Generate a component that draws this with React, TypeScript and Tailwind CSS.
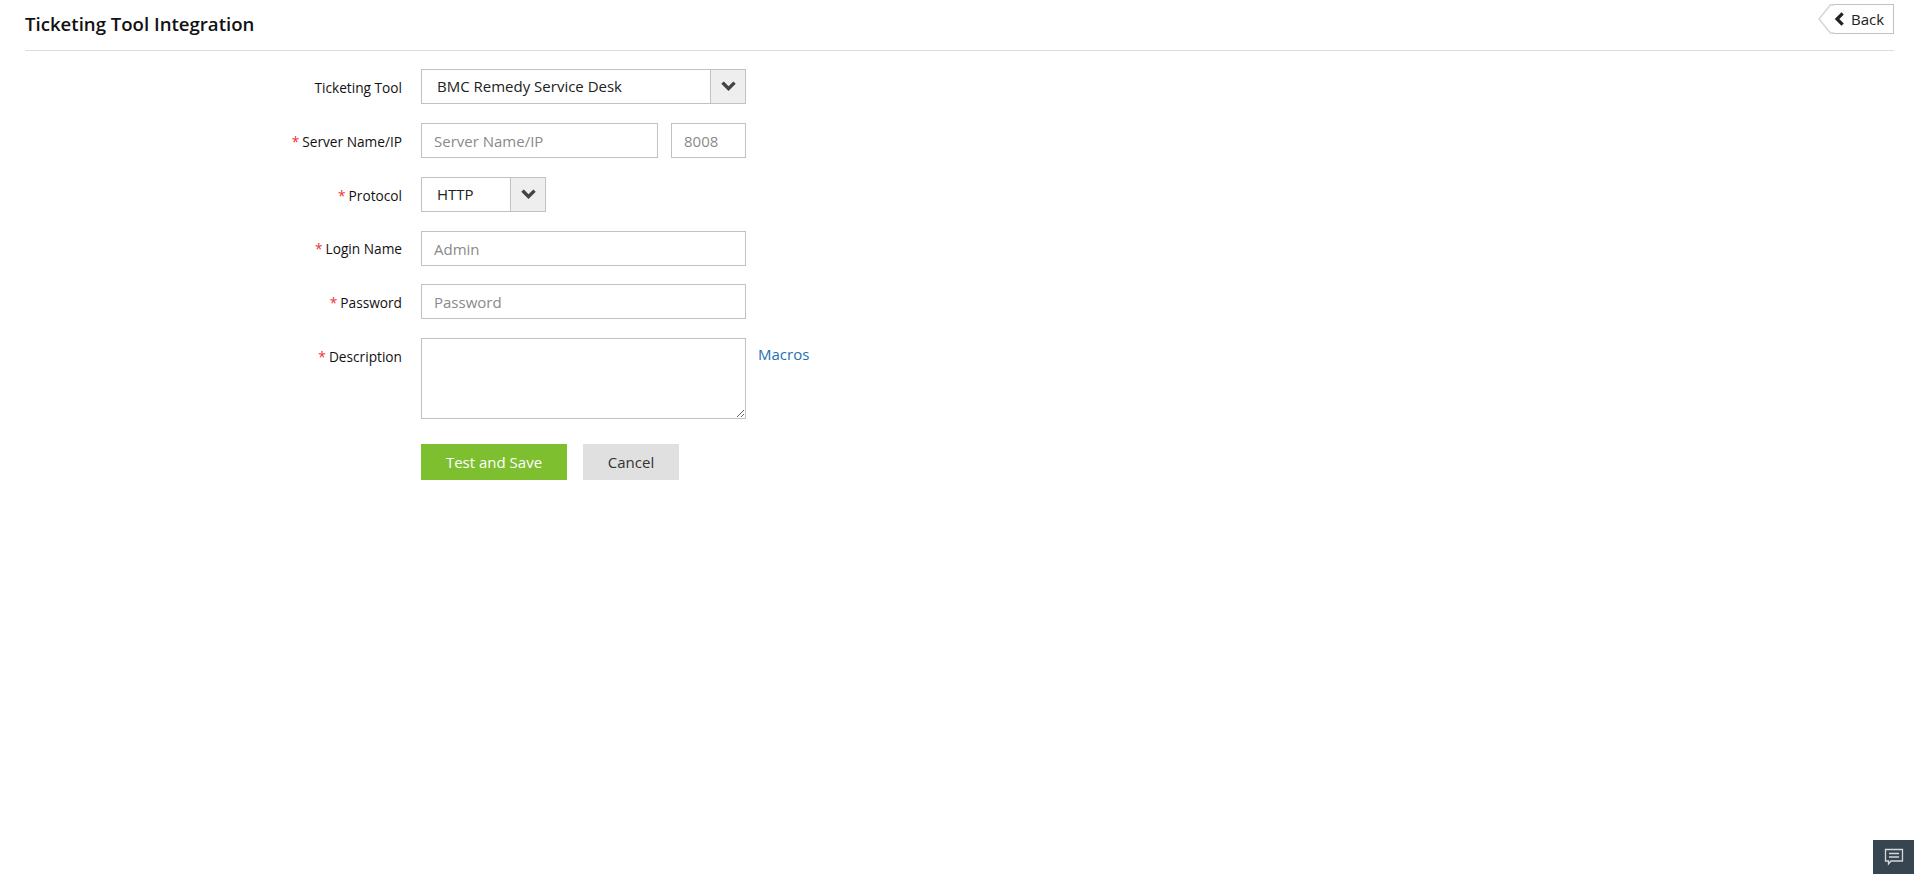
function Chevron({ dir, className }: { dir: "down" | "left"; className: string }) {
  return (
    <svg viewBox="0 0 14 14" className={className} fill="none" stroke="currentColor" strokeWidth="3.2" strokeLinecap="square">
      {dir === "down" ? <path d="M2.500 4.500 7 9l4.500-4.500" /> : <path d="M9.500 2.500 5 7l4.500 4.500" />}
    </svg>
  );
}

function Label({ text, required = true, top = "pt-[2px]" }: { text: string; required?: boolean; top?: string }) {
  return (
    <label className={`w-[421px] shrink-0 pr-[19px] text-right text-[13.7px] text-[#111] leading-[36px] whitespace-nowrap ${top}`}>
      {required && <span className="mr-[3px] text-[#e8343a]">*</span>}
      {text}
    </label>
  );
}

function TextInput({ placeholder, className }: { placeholder: string; className: string }) {
  return (
    <input
      placeholder={placeholder}
      className={`h-[35px] border border-[#c2c2c2] bg-white px-[12px] text-[15px] text-[#333] outline-none placeholder:text-[#8a8a8a] ${className}`}
    />
  );
}

function SelectBox({ value, width }: { value: string; width: string }) {
  return (
    <div className={`flex h-[35px] items-stretch border border-[#c2c2c2] bg-white ${width}`}>
      <div className="flex-1 pl-[15px] text-[15px] leading-[33px] text-[#222]">{value}</div>
      <div className="flex w-[35px] items-center justify-center border-l border-[#c2c2c2] bg-[#eeeeee] text-[#444]">
        <Chevron dir="down" className="h-[15px] w-[15px]" />
      </div>
    </div>
  );
}

export default function App() {
  return (
    <div className="relative h-[874px] w-full overflow-hidden bg-white font-['Open_Sans',sans-serif]">
      <header className="ml-[25px] mr-[26px] flex h-[51px] items-start justify-between border-b border-[#dcdcdc]">
        <h1 className="mt-[10px] text-[18.6px] leading-[28px] font-semibold text-[#111]">Ticketing Tool Integration</h1>
        <button className="mt-[4px] flex h-[30px] w-[76px] items-center">
          <svg width="16" height="30" viewBox="0 0 16 30" className="shrink-0">
            <path d="M16 .8H12.500L1 15 12.500 29.200H16" fill="#fff" stroke="#d8d8d8" strokeWidth="1.700" />
          </svg>
          <span className="flex h-[30px] flex-1 items-center gap-[5px] border-y border-r border-[#c2c2c2] text-[15px] text-[#222]">
            <Chevron dir="left" className="-ml-[2px] h-[14px] w-[14px] text-[#222]" />
            Back
          </span>
        </button>
      </header>

      <form className="pt-[18px]">
        <div className="flex h-[35px] items-center">
          <Label text="Ticketing Tool" required={false} />
          <SelectBox value="BMC Remedy Service Desk" width="w-[325px]" />
        </div>
        <div className="mt-[19px] flex h-[35px] items-center">
          <Label text="Server Name/IP" />
          <TextInput placeholder="Server Name/IP" className="w-[237px]" />
          <TextInput placeholder="8008" className="ml-[13px] w-[75px]" />
        </div>
        <div className="mt-[19px] flex h-[35px] items-center">
          <Label text="Protocol" />
          <SelectBox value="HTTP" width="w-[125px]" />
        </div>
        <div className="mt-[19px] flex h-[35px] items-center">
          <Label text="Login Name" top="pt-0" />
          <TextInput placeholder="Admin" className="w-[325px]" />
        </div>
        <div className="mt-[18px] flex h-[35px] items-center">
          <Label text="Password" />
          <TextInput placeholder="Password" className="w-[325px]" />
        </div>
        <div className="mt-[19px] flex items-start">
          <Label text="Description" top="pt-[1px]" />
          <textarea className="h-[81px] w-[325px] border border-[#c2c2c2] bg-white outline-none" />
          <a className="ml-[12px] mt-[5px] text-[15px] leading-[22px] text-[#1f6fb2]">Macros</a>
        </div>
        <div className="mt-[25px] flex gap-[16px] pl-[421px]">
          <button type="button" className="h-[36px] w-[146px] bg-[#7dbf2f] text-[15px] text-white">Test and Save</button>
          <button type="button" className="h-[36px] w-[96px] bg-[#e0e0e0] text-[15px] text-[#333]">Cancel</button>
        </div>
      </form>

      <div className="absolute right-[6px] bottom-0 flex h-[34px] w-[41px] items-center justify-center bg-[#36454f]">
        <svg width="20" height="18" viewBox="0 0 20 18" fill="none" stroke="#d5d9dc" strokeWidth="1.3">
          <path d="M1.500 1.500H18.500V13H7L4.500 16V13H1.500Z" />
          <path d="M5 5.500H15M5 9H15" />
        </svg>
      </div>
    </div>
  );
}
